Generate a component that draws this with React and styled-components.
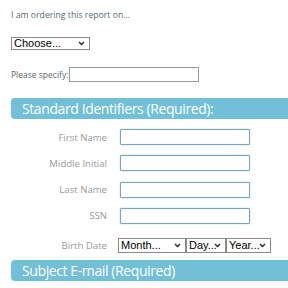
import React from 'react';
import styled, { createGlobalStyle } from 'styled-components';

const GlobalStyle = createGlobalStyle`
    html, body {
        margin: 0;
        padding: 0;
        background: #fff;
        overflow: hidden;
    }
`

const chevron = "url(\"data:image/svg+xml;utf8,<svg xmlns='http://www.w3.org/2000/svg' width='7' height='5' viewBox='0 0 7 5'><path d='M1 1 L3.5 3.5 L6 1' fill='none' stroke='%23222' stroke-width='1.3'/></svg>\")"

const Page = styled.div`
    width: 288px;
    height: 288px;
    padding: 9px 0 0 11px;
    box-sizing: border-box;
    font-family: "Open Sans", sans-serif;
    overflow: hidden;
`

const Intro = styled.p`
    margin: 0;
    font-size: 8.7px;
    color: #5a6a70;
    line-height: 12px;
`

const Select = styled.select`
    appearance: none;
    -webkit-appearance: none;
    font-family: "Liberation Sans", Arial, sans-serif;
    font-size: 11px;
    color: #000;
    height: ${p => p.$h || 13}px;
    width: ${p => p.$w}px;
    padding: 0 0 0 2px;
    border: 1px solid #8a8a8a;
    border-radius: 0;
    background: #fff ${chevron} no-repeat right 4px center;
    box-sizing: border-box;
    margin: 0;
    line-height: 1;
`

const ChooseRow = styled.div`
    margin-top: 16px;
    display: flex;
`

const SpecifyRow = styled.div`
    margin-top: 17px;
    display: flex;
    align-items: center;
    gap: 1px;
`

const SmallLabel = styled.span`
    font-size: 8.5px;
    color: #5a6a70;
`

const PlainInput = styled.input`
    width: 130px;
    height: 15px;
    box-sizing: border-box;
    border: 1px solid #999;
    margin: 0;
    padding: 0;
`

const Bar = styled.div`
    margin-top: ${p => p.$top}px;
    height: 21px;
    background: #72c0d8;
    border-radius: 4px 0 0 4px;
    color: #fff;
    font-size: 14px;
    line-height: 21px;
    padding-left: 11px;
    white-space: nowrap;
    letter-spacing: -0.4px;
`

const Fields = styled.div`
    display: grid;
    grid-template-columns: 96px 130px;
    column-gap: 13px;
    row-gap: 10.3px;
    margin-top: 10px;
    align-items: center;
`

const FieldLabel = styled.label`
    text-align: right;
    font-size: 9.6px;
    color: #9a9a9a;
    margin-top: ${p => p.$top || 0}px;
`

const BlueInput = styled.input`
    width: 130px;
    height: 16px;
    box-sizing: border-box;
    margin: 0;
    padding: 0;
    border: 1px solid #7ea2b8;
    border-radius: 1px;
    box-shadow: 0 0 2px #a9dbee, inset 0 0 1px #bcdcea;
`

const DateGroup = styled.div`
    display: flex;
    margin-left: -2px;
    margin-top: 4px;
    width: 160px;
`

const App = () => {
    return (
        <Page>
            <GlobalStyle />
            <Intro>I am ordering this report on...</Intro>
            <ChooseRow>
                <Select $w={79}>
                    <option>Choose...</option>
                </Select>
            </ChooseRow>
            <SpecifyRow>
                <SmallLabel>Please specify:</SmallLabel>
                <PlainInput />
            </SpecifyRow>
            <Bar $top={16}>Standard Identifiers (Required):</Bar>
            <Fields>
                <FieldLabel>First Name</FieldLabel>
                <BlueInput />
                <FieldLabel>Middle Initial</FieldLabel>
                <BlueInput />
                <FieldLabel>Last Name</FieldLabel>
                <BlueInput />
                <FieldLabel>SSN</FieldLabel>
                <BlueInput />
                <FieldLabel $top={4}>Birth Date</FieldLabel>
                <DateGroup>
                    <Select $w={68} $h={15}><option>Month...</option></Select>
                    <Select $w={40} $h={15}><option>Day...</option></Select>
                    <Select $w={45} $h={15}><option>Year...</option></Select>
                </DateGroup>
            </Fields>
            <Bar $top={7}>Subject E-mail (Required)</Bar>
        </Page>
    );
}

export default App;
